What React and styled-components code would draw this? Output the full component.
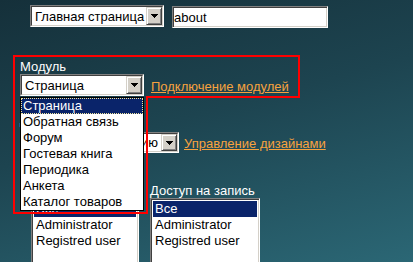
import styled, { createGlobalStyle } from "styled-components";

const GlobalStyle = createGlobalStyle`
  html, body {
    margin: 0;
    padding: 0;
  }
  body {
    width: 413px;
    height: 262px;
    overflow: hidden;
    background: linear-gradient(165deg, #15303a 0%, #1d4450 45%, #2b6775 100%);
    font-family: "Liberation Sans", Arial, sans-serif;
    font-size: 13px;
  }
`;

const Page = styled.div`
  padding-top: 5px;
  height: 262px;
  box-sizing: border-box;
  overflow: hidden;
`;

const TopRow = styled.div`
  display: flex;
  align-items: flex-start;
  gap: 8px;
  padding-left: 30px;
`;

const SelectBox = styled.div`
  width: ${(p) => p.$w}px;
  height: ${(p) => p.$h || 22}px;
  box-sizing: border-box;
  display: flex;
  flex-shrink: 0;
  border: 1px solid;
  border-color: #808080 #ffffff #ffffff #808080;
  background: #fff;
`;

const Field = styled.div`
  flex: 1;
  min-width: 0;
  display: flex;
  border: 1px solid;
  border-color: #404040 #d4d0c8 #d4d0c8 #404040;
`;

const Value = styled.span`
  flex: 1;
  min-width: 0;
  display: flex;
  align-items: center;
  padding-left: 3px;
  white-space: nowrap;
  overflow: hidden;
  color: #000;
`;

const DropButton = styled.span`
  width: 16px;
  box-sizing: border-box;
  display: flex;
  align-items: center;
  justify-content: center;
  background: #d4d0c8;
  border: 1px solid;
  border-color: #d4d0c8 #404040 #404040 #d4d0c8;
  box-shadow: inset 1px 1px #ffffff, inset -1px -1px #808080;
`;

const TextInput = styled.input`
  width: 156px;
  height: 22px;
  margin: 1px 0 0;
  box-sizing: border-box;
  padding: 0 1px;
  border: 1px solid;
  border-color: #808080 #ffffff #ffffff #808080;
  box-shadow: inset 1px 1px #404040, inset -1px -1px #d4d0c8;
  font-family: "Liberation Sans", Arial, sans-serif;
  font-size: 13px;
  color: #000;
  outline: none;
`;

const ModuleBox = styled.div`
  position: relative;
  margin: 27px 0 0 13px;
  width: 287px;
  height: 43px;
  box-sizing: border-box;
  padding: 2px 0 0 5px;
  border: 2px solid #ff0000;
  border-bottom: none;

  &::after {
    content: "";
    position: absolute;
    left: 131px;
    right: 0;
    bottom: 0;
    height: 2px;
    background: #ff0000;
  }
`;

const Label = styled.div`
  color: #fff;
  line-height: ${(p) => p.$lh || 15}px;
  white-space: nowrap;
`;

const FieldRow = styled.div`
  display: flex;
  align-items: flex-end;
  gap: ${(p) => p.$gap}px;
  margin-top: ${(p) => p.$mt || 0}px;
`;

const Link = styled.a`
  color: #f7a23e;
  text-decoration: underline;
  line-height: 15px;
  margin-bottom: 2px;
  white-space: nowrap;
  cursor: pointer;
`;

const Popup = styled.div`
  position: absolute;
  z-index: 2;
  left: -2px;
  top: calc(100% - 2px);
  width: 135px;
  box-sizing: border-box;
  padding: 1px 0 1px 5px;
  border: 2px solid #ff0000;
  border-top: none;
`;

const OptionList = styled.div`
  width: 124px;
  box-sizing: border-box;
  border: 1px solid #000;
  background: #fff;
`;

const Option = styled.div`
  height: 16px;
  line-height: 16px;
  padding-left: 2px;
  white-space: nowrap;
  color: ${(p) => (p.$active ? "#fff" : "#000")};
  background: ${(p) => (p.$active ? "#0a246a" : "transparent")};
  outline: ${(p) => (p.$focus ? "1px dotted #f0e6a0" : "none")};
  outline-offset: -1px;
`;

const DesignBlock = styled.div`
  margin-top: 14px;
  padding-left: 20px;
`;

const AccessRow = styled.div`
  display: flex;
  gap: 11px;
  margin-top: 30px;
  padding-left: 31px;
`;

const ListBox = styled.div`
  width: ${(p) => p.$w}px;
  height: 80px;
  box-sizing: border-box;
  padding: 1px;
  background: #fff;
  border: 1px solid;
  border-color: #808080 #ffffff #ffffff #808080;
  box-shadow: inset 1px 1px #404040, inset -1px -1px #d4d0c8;
`;

const ListInner = styled.div`
  margin: 1px;
`;

const Arrow = () => (
  <svg width="7" height="4" viewBox="0 0 7 4">
    <path d="M0 0h7v1H0zM1 1h5v1H1zM2 2h3v1H2zM3 3h1v1H3z" fill="#000" />
  </svg>
);

const Select = ({ w, h, value }) => (
  <SelectBox $w={w} $h={h}>
    <Field>
      <Value>{value}</Value>
      <DropButton>
        <Arrow />
      </DropButton>
    </Field>
  </SelectBox>
);

const modules = [
  "Страница",
  "Обратная связь",
  "Форум",
  "Гостевая книга",
  "Периодика",
  "Анкета",
  "Каталог товаров",
];

const roles = ["Все", "Administrator", "Registred user"];

const RoleList = ({ w }) => (
  <ListBox $w={w}>
    <ListInner>
      {roles.map((r, i) => (
        <Option key={r} $active={i === 0}>
          {r}
        </Option>
      ))}
    </ListInner>
  </ListBox>
);

export default function App() {
  return (
    <Page>
      <GlobalStyle />
      <TopRow>
        <Select w={134} value="Главная страница" />
        <TextInput defaultValue="about" />
      </TopRow>

      <ModuleBox>
        <Label>Модуль</Label>
        <FieldRow $gap={7}>
          <Select w={124} value="Страница" />
          <Link>Подключение модулей</Link>
        </FieldRow>
        <Popup>
          <OptionList>
            {modules.map((m, i) => (
              <Option key={m} $active={i === 0} $focus={i === 0}>
                {m}
              </Option>
            ))}
          </OptionList>
        </Popup>
      </ModuleBox>

      <DesignBlock>
        <Label $lh={16}>Дизайн</Label>
        <FieldRow $gap={5} $mt={4}>
          <Select w={159} h={21} value="Дизайн по умолчанию" />
          <Link>Управление дизайнами</Link>
        </FieldRow>
      </DesignBlock>

      <AccessRow>
        <div>
          <Label>Доступ на чтение</Label>
          <RoleList w={108} />
        </div>
        <div>
          <Label>Доступ на запись</Label>
          <RoleList w={110} />
        </div>
      </AccessRow>
    </Page>
  );
}
